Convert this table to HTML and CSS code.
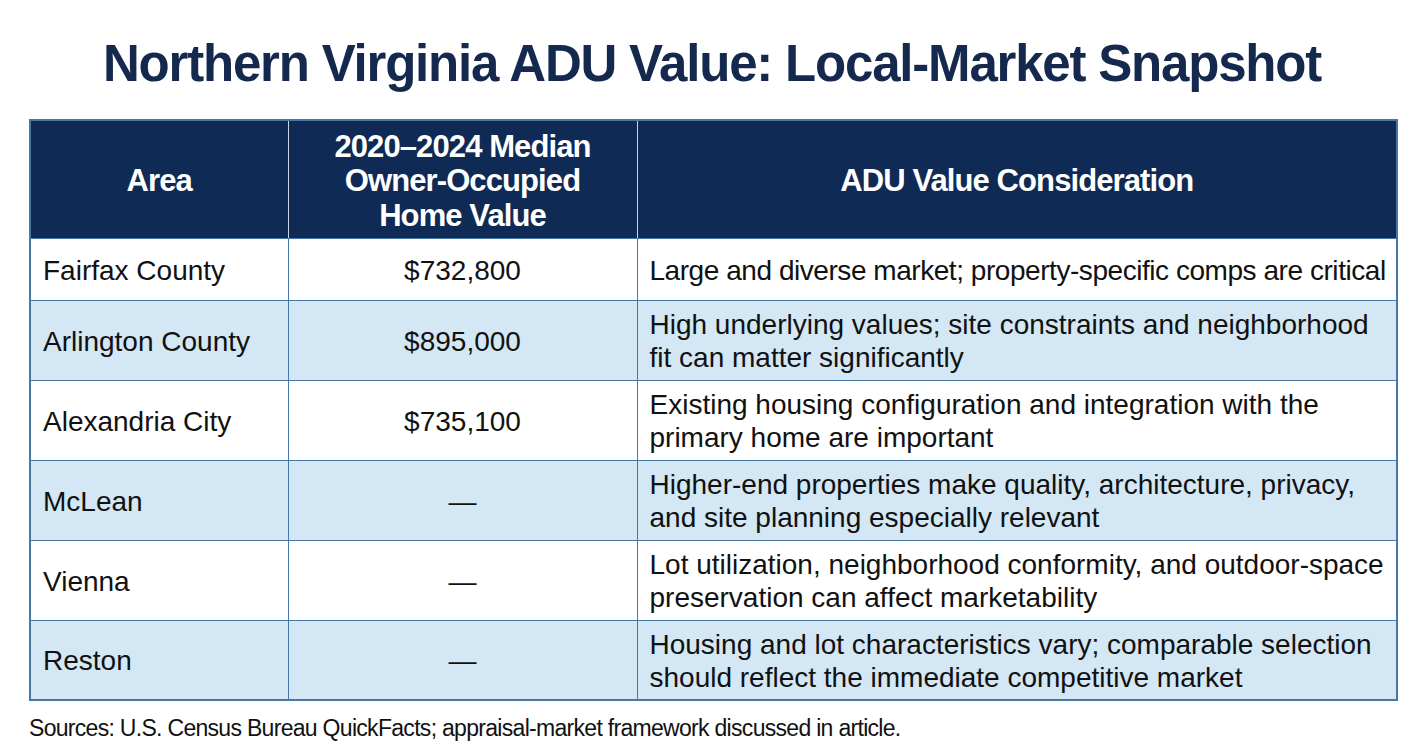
FILE: index.html
```html
<!DOCTYPE html>
<html lang="en">
<head>
<meta charset="utf-8">
<title>Northern Virginia ADU Value</title>
<link rel="stylesheet" href="styles.css">
</head>
<body>
<main class="page">
  <h1 class="title">Northern Virginia ADU Value: Local-Market Snapshot</h1>
  <table class="snap">
    <colgroup>
      <col class="c1"><col class="c2"><col class="c3">
    </colgroup>
    <thead>
      <tr>
        <th>Area</th>
        <th>2020–2024 Median<br>Owner-Occupied<br>Home Value</th>
        <th>ADU Value Consideration</th>
      </tr>
    </thead>
    <tbody>
      <tr class="short">
        <td class="area">Fairfax County</td>
        <td class="val">$732,800</td>
        <td class="note tight">Large and diverse market; property-specific comps are critical</td>
      </tr>
      <tr class="alt">
        <td class="area">Arlington County</td>
        <td class="val">$895,000</td>
        <td class="note">High underlying values; site constraints and neighborhood<br>fit can matter significantly</td>
      </tr>
      <tr>
        <td class="area">Alexandria City</td>
        <td class="val">$735,100</td>
        <td class="note">Existing housing configuration and integration with the<br>primary home are important</td>
      </tr>
      <tr class="alt">
        <td class="area">McLean</td>
        <td class="val">—</td>
        <td class="note">Higher-end properties make quality, architecture, privacy,<br>and site planning especially relevant</td>
      </tr>
      <tr>
        <td class="area">Vienna</td>
        <td class="val">—</td>
        <td class="note">Lot utilization, neighborhood conformity, and outdoor-space<br>preservation can affect marketability</td>
      </tr>
      <tr class="alt">
        <td class="area">Reston</td>
        <td class="val">—</td>
        <td class="note">Housing and lot characteristics vary; comparable selection<br>should reflect the immediate competitive market</td>
      </tr>
    </tbody>
  </table>
  <p class="source">Sources: U.S. Census Bureau QuickFacts; appraisal-market framework discussed in article.</p>
</main>
</body>
</html>
```

FILE: styles.css
```css
html, body {
  margin: 0;
  padding: 0;
  background: #ffffff;
}
.page {
  width: 1424px;
  height: 752px;
  font-family: "Liberation Sans", Arial, sans-serif;
  color: #111111;
  overflow: hidden;
}
.title {
  margin: 0 0 25px 0;
  padding-top: 34px;
  text-align: center;
  font-size: 51px;
  line-height: 60px;
  letter-spacing: -1.2px;
  font-weight: 700;
  color: #14294d;
}
.snap {
  margin-left: 29px;
  width: 1367px;
  border-collapse: collapse;
  table-layout: fixed;
  border: 2px solid #4677a6;
}
.c1 { width: 258px; }
.c2 { width: 349px; }
.c3 { width: 760px; }
.snap th, .snap td {
  border: 1.5px solid #4677a6;
  padding: 0;
}
.snap thead tr { height: 118px; }
.snap th {
  background: #0f2a54;
  color: #ffffff;
  font-size: 31px;
  line-height: 34.5px;
  letter-spacing: -0.9px;
  font-weight: 700;
  text-align: center;
  padding-top: 4px;
  border-color: #c9d6e3;
  border-top-color: #4677a6;
  border-bottom-color: #4677a6;
}
.snap th:first-child { border-left-color: #4677a6; }
.snap th:last-child { border-right-color: #4677a6; }
.snap tbody tr { height: 80px; background: #ffffff; }
.snap tbody tr.short { height: 62px; }
.snap tbody tr.alt { background: #d3e7f4; }
.snap td {
  font-size: 28px;
  line-height: 33px;
  vertical-align: middle;
  padding-top: 2px;
}
.snap td.area { padding-left: 12px; }
.snap td.val { text-align: center; }
.snap td.note { padding-left: 12px; }
.snap td.tight { letter-spacing: -0.45px; white-space: nowrap; }
.source {
  margin: 0;
  padding: 14px 0 0 29px;
  font-size: 23px;
  line-height: 26px;
  letter-spacing: -0.7px;
  color: #111111;
}
```
